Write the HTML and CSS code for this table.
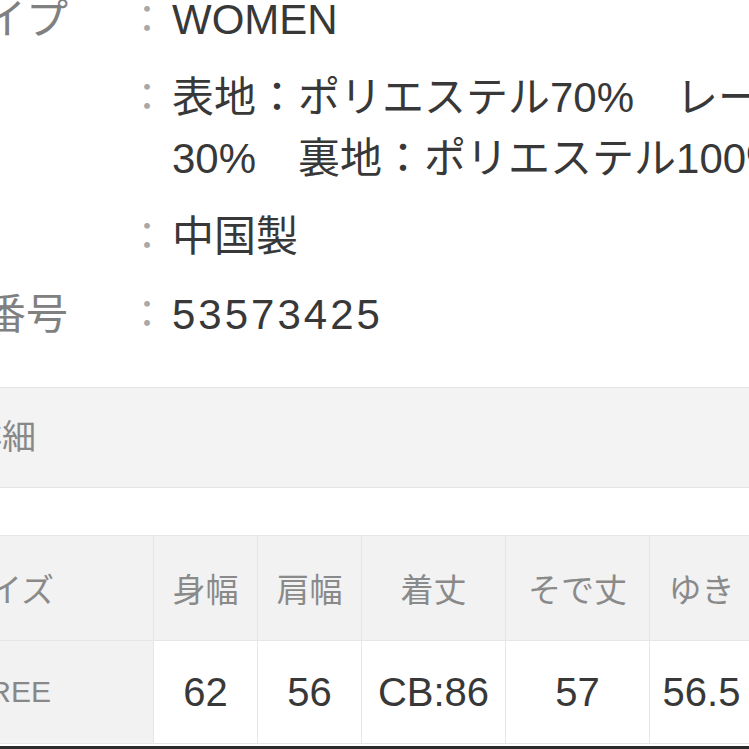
FILE: index.html
```html
<!doctype html>
<html lang="ja">
<head>
<meta charset="utf-8">
<title>商品詳細</title>
<link rel="stylesheet" href="styles.css">
</head>
<body>

<div class="page">

	<!-- item spec -->
	<dl class="spec">
		<div class="spec-row">
			<dt>性別タイプ</dt>
			<dd class="colon">：</dd>
			<dd class="value">WOMEN</dd>
		</div>
		<div class="spec-row">
			<dt>素材</dt>
			<dd class="colon">：</dd>
			<dd class="value">表地：ポリエステル70%　レーヨン30%　裏地：ポリエステル100%</dd>
		</div>
		<div class="spec-row">
			<dt>原産国</dt>
			<dd class="colon">：</dd>
			<dd class="value">中国製</dd>
		</div>
		<div class="spec-row">
			<dt>ストア番号</dt>
			<dd class="colon">：</dd>
			<dd class="value num">53573425</dd>
		</div>
	</dl>

	<!-- size detail -->
	<h2 class="band">サイズ詳細</h2>

	<table class="sizes">
		<colgroup>
			<col class="c-name">
			<col class="c-s">
			<col class="c-s">
			<col class="c-m">
			<col class="c-m">
			<col class="c-s">
		</colgroup>
		<thead>
			<tr>
				<th class="name">サイズ</th>
				<th>身幅</th>
				<th>肩幅</th>
				<th>着丈</th>
				<th>そで丈</th>
				<th>ゆき</th>
			</tr>
		</thead>
		<tbody>
			<tr>
				<td class="name">FREE</td>
				<td>62</td>
				<td>56</td>
				<td>CB:86</td>
				<td>57</td>
				<td>56.5</td>
			</tr>
		</tbody>
	</table>

	<div class="edge"></div>
</div>

</body>
</html>
```

FILE: styles.css
```css
/* ====  Base  ==== */

* {
	box-sizing: border-box;
}

html, body {
	margin:     0;
	height:     100%;
	overflow:   hidden;
	background: white;
}

body {
	font-family: "Liberation Sans", "Noto Sans CJK JP", sans-serif;
	color:       #333;
}

/* The page is wider than the window, both edges fall outside */
.page {
	width:       1060px;
	margin-left: -180px;
	margin-top:  -11px;
}


/* ====  Item spec  ==== */

.spec {
	margin:       0;
	padding-left: 38px;
	font-size:    42px;
	line-height:  61px;
}

.spec-row {
	display:       flex;
	margin-bottom: 17px;
}

.spec-row:last-child {
	margin-bottom: 0;
}

.spec dt {
	width:       270px;
	flex:        none;
	color:       #808080;
	white-space: nowrap;
	overflow:    hidden;
}

.spec dd {
	margin: 0;
}

.spec .colon {
	width:     44px;
	flex:      none;
	color:     #a8a8a8;
	font-size: 38px;
}

.spec .value {
	flex:  1;
	color: #383838;
}

/* digits run wider in the original face */
.spec .num {
	letter-spacing: 3px;
}


/* ====  Size detail  ==== */

.band {
	margin:        42px 0 0;
	height:        101px;
	padding-left:  47px;
	font-size:     34px;
	font-weight:   normal;
	line-height:   99px;
	color:         #888;
	background:    #f3f3f3;
	border-top:    1px solid #e4e4e4;
	border-bottom: 1px solid #e4e4e4;
}

.sizes {
	margin-top:      47px;
	width:           933px;
	table-layout:    fixed;
	border-collapse: collapse;
}

.c-name { width: 333px; }
.c-s    { width: 104px; }
.c-m    { width: 144px; }

.sizes th,
.sizes td {
	border:      1px solid #e6e6e6;
	text-align:  center;
	padding:     0;
	white-space: nowrap;
}

.sizes th {
	height:      105px;
	font-size:   33px;
	font-weight: normal;
	color:       #8a8a8a;
	background:  #f2f2f2;
}

.sizes td {
	height:     103px;
	font-size:  40px;
	color:      #383838;
	background: white;
}

.sizes th.name {
	text-align:   left;
	padding-left: 135px;
}

.sizes td.name {
	text-align:   left;
	padding-left: 150px;
	font-size:    30px;
	color:        #888;
	background:   #f2f2f2;
}

.edge {
	margin-top: 2px;
	height:     6px;
	background: #2b2b2b;
}
```
